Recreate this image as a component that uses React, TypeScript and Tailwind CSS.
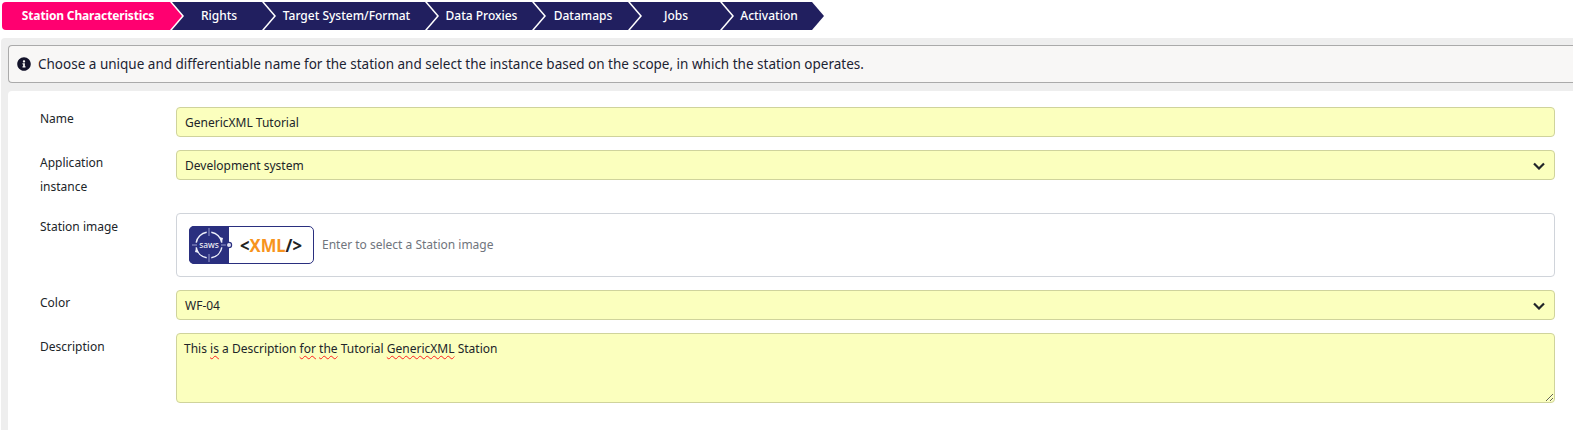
import { FaInfoCircle } from "react-icons/fa";

const Chevron = () => (
  <svg width="12" height="8" viewBox="0 0 12 8" className="shrink-0" fill="none">
    <path d="M1 1.5l5 5 5-5" stroke="#212529" strokeWidth="2.2" />
  </svg>
);

const Logo = () => (
  <svg width="125" height="38" viewBox="0 0 125 38" className="shrink-0">
    <rect x="0.5" y="0.5" width="124" height="37" rx="4.5" fill="#fff" stroke="#2a2f7f" />
    <path d="M5 0h35v38H5a5 5 0 0 1-5-5V5a5 5 0 0 1 5-5z" fill="#2a2f7f" />
    <path d="M20 2v8M20 28v8M3 19h5M32 19h8" stroke="#a4a8d8" strokeWidth="0.9" fill="none" />
    <g fill="none" stroke="#eef0fa" strokeWidth="1.5">
      <path d="M22.300 6.200A13 13 0 0 1 32.800 16.700" />
      <path d="M32.800 21.300A13 13 0 0 1 22.300 31.800" />
      <path d="M17.700 31.800A13 13 0 0 1 7.200 21.300" />
      <path d="M7.200 16.700A13 13 0 0 1 17.700 6.200" />
    </g>
    <path d="M30 11l4 1-1 4zM10 27l-4-1 1-4z" fill="#eef0fa" />
    <text x="20" y="22" textAnchor="middle" fontSize="8.500" fill="#fff" fontFamily="'Noto Sans', sans-serif">saws</text>
    <circle cx="40" cy="19" r="2.600" fill="#dfe0f3" stroke="#2a2f7f" strokeWidth="1.200" />
    <text x="51" y="26" fill="#222" fontFamily="'Noto Sans', sans-serif" fontWeight="700" fontSize="18" textLength="62" lengthAdjust="spacingAndGlyphs">
      &lt;<tspan fill="#f7941d">XML</tspan>/&gt;
    </text>
  </svg>
);

const navy = "bg-[#211f5f] font-medium pr-[6px]";
const steps = [
  { label: "Station Characteristics", w: "w-[180px]", z: "z-[7]", inner: "bg-[#ff0070] font-bold tracking-[-0.15px] rounded-l-[4px] pr-[8px]", wrap: "ml-[2px] w-[182px]" },
  { label: "Rights", w: "w-[104px]", z: "z-[6]", inner: navy, wrap: "w-[106px]" },
  { label: "Target System/Format", w: "w-[175px]", z: "z-[5]", inner: navy, wrap: "w-[177px]" },
  { label: "Data Proxies", w: "w-[119px]", z: "z-[4]", inner: navy, wrap: "w-[121px]" },
  { label: "Datamaps", w: "w-[108px]", z: "z-[3]", inner: navy, wrap: "w-[110px]" },
  { label: "Jobs", w: "w-[104px]", z: "z-[2]", inner: "bg-[#211f5f] font-medium pr-[8px]", wrap: "w-[106px]" },
  { label: "Activation", w: "w-[104px]", z: "z-[1]", inner: navy, wrap: "w-[106px]" },
];

const labelCls = "w-[168px] shrink-0 pl-[32px] leading-[24px] pt-[1px]";
const fieldBase = "flex-1 rounded-[4px] border border-[#cfd39c] bg-[#fbffbe] flex items-center pl-[8px] pt-[1px]";
const wavy = "underline decoration-wavy decoration-[#ff2020] decoration-1 underline-offset-2";

export default function App() {
  return (
    <div className="w-[1573px] h-[430px] overflow-hidden bg-white text-[12px] text-[#212529] font-['Noto_Sans',sans-serif]">
      <div className="flex h-[38px] pt-[2px] items-start">
        {steps.map((s) => (
          <div
            key={s.label}
            className={`${s.wrap} ${s.z} relative shrink-0 -mr-[14px] h-[28px] bg-white [clip-path:polygon(0_0,calc(100%-12px)_0,100%_50%,calc(100%-12px)_100%,0_100%)]`}
          >
            <div
              className={`${s.w} ${s.inner} h-[28px] flex items-center justify-center text-white whitespace-nowrap [clip-path:polygon(0_0,calc(100%-12px)_0,100%_50%,calc(100%-12px)_100%,0_100%)]`}
            >
              {s.label}
            </div>
          </div>
        ))}
      </div>
      <div className="ml-[1px] h-[392px] bg-[#eeeeee] rounded-tl-[4px] pt-[7px] pl-[7px] flex flex-col gap-[8px]">
        <div className="h-[38px] shrink-0 rounded-l-[4px] border border-r-0 border-[#aaaaaa] bg-[#f8f7f6] flex items-center pl-[8px] gap-[7px] text-[13.5px] text-[#1c2333]">
          <FaInfoCircle size={14} className="text-[#14142b] shrink-0" />
          <span>Choose a unique and differentiable name for the station and select the instance based on the scope, in which the station operates.</span>
        </div>
        <div className="flex-1 bg-white rounded-tl-[4px] pt-[16px] pr-[18px]">
          <div className="flex h-[30px] mb-[13px]">
            <div className="w-[168px] shrink-0 pl-[32px] leading-[24px]">Name</div>
            <div className={fieldBase}>GenericXML Tutorial</div>
          </div>
          <div className="flex h-[48px] mb-[15px]">
            <div className={labelCls}>Application<br />instance</div>
            <div className={`${fieldBase} h-[30px] justify-between pr-[9px]`}>
              <span>Development system</span>
              <Chevron />
            </div>
          </div>
          <div className="flex h-[64px] mb-[13px]">
            <div className={`${labelCls} pt-[2px]`}>Station image</div>
            <div className="flex-1 rounded-[4px] border border-[#d0d4da] flex items-center pl-[12px] gap-[8px] text-[#70757d]">
              <Logo />
              <span>Enter to select a Station image</span>
            </div>
          </div>
          <div className="flex h-[30px] mb-[13px]">
            <div className={labelCls}>Color</div>
            <div className={`${fieldBase} justify-between pr-[9px]`}>
              <span>WF-04</span>
              <Chevron />
            </div>
          </div>
          <div className="flex">
            <div className={`${labelCls} pt-[2px]`}>Description</div>
            <div className="flex-1 h-[70px] rounded-[4px] border border-[#cfd39c] bg-[#fbffbe] pl-[7px] pr-[8px] pt-[6px] leading-[18px] resize-y overflow-auto">
              This <span className={wavy}>is</span> a Description <span className={wavy}>for</span> <span className={wavy}>the</span> Tutorial <span className={wavy}>GenericXML</span> Station
            </div>
          </div>
        </div>
      </div>
    </div>
  );
}
